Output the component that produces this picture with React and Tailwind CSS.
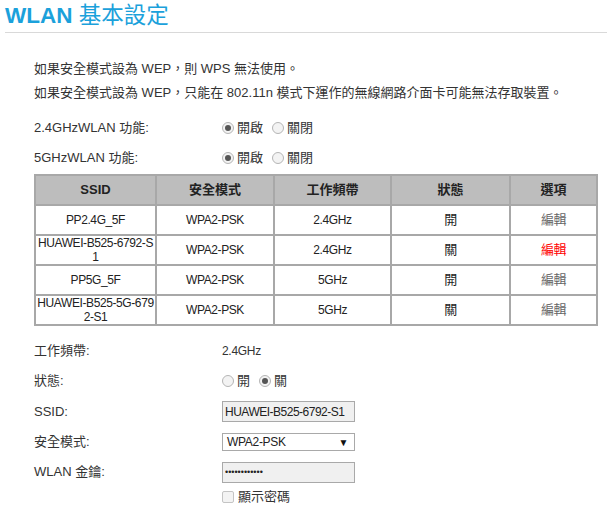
import React from "react";

const font = {
  fontFamily: '"Liberation Sans", Arial, "Noto Sans CJK TC", sans-serif',
};

const networks = [
  { ssid: ["PP2.4G_5F"], mode: "WPA2-PSK", band: "2.4GHz", status: "開", active: false },
  { ssid: ["HUAWEI-B525-6792-S", "1"], mode: "WPA2-PSK", band: "2.4GHz", status: "關", active: true },
  { ssid: ["PP5G_5F"], mode: "WPA2-PSK", band: "5GHz", status: "開", active: false },
  { ssid: ["HUAWEI-B525-5G-679", "2-S1"], mode: "WPA2-PSK", band: "5GHz", status: "關", active: false },
];

const Radio = ({ checked, label }) => (
  <label className="flex items-center mr-[9px]">
    <span className="w-[12px] h-[12px] rounded-full border border-[#b5b5b5] bg-[#f3f3f3] flex items-center justify-center mr-[3px]">
      {checked && <span className="w-[6px] h-[6px] rounded-full bg-[#555]"></span>}
    </span>
    <span>{label}</span>
  </label>
);

const FormRow = ({ label, children, h = "h-[30px]" }) => (
  <div className={`flex items-center ${h}`}>
    <div className="w-[188px]">{label}</div>
    <div className="flex items-center">{children}</div>
  </div>
);

const cell = "border-2 border-[#a8a8a8]";

export default function App() {
  return (
    <div className="w-[607px] h-[516px] bg-white text-[13px] text-[#333] overflow-hidden" style={font}>
      {/* Title */}
      <div className="h-[33px] ml-[5px] border-b border-[#d9d9d9] leading-[31px] text-[22.5px] text-[#1ba1db]">
        <span className="font-bold">WLAN</span>{" "}
        <span className="font-normal">基本設定</span>
      </div>

      <div className="pl-[34px] pr-[11px]">
        {/* Notes */}
        <div className="mt-[24px] leading-[24px]">
          <p>如果安全模式設為 WEP，則 WPS 無法使用。</p>
          <p>如果安全模式設為 WEP，只能在 802.11n 模式下運作的無線網路介面卡可能無法存取裝置。</p>
        </div>

        <div className="mt-[8px]">
          <FormRow label="2.4GHzWLAN 功能:">
            <Radio checked label="開啟" />
            <Radio label="關閉" />
          </FormRow>
          <FormRow label="5GHzWLAN 功能:">
            <Radio checked label="開啟" />
            <Radio label="關閉" />
          </FormRow>
        </div>

        {/* Table */}
        <table className="mt-[1px] w-[562px] border-collapse border-2 border-[#a8a8a8] table-fixed text-center">
          <colgroup>
            <col className="w-[121px]" />
            <col className="w-[118px]" />
            <col className="w-[117px]" />
            <col className="w-[119px]" />
            <col className="w-[87px]" />
          </colgroup>
          <thead>
            <tr className="h-[30px] bg-[#bdbdbd] text-[#222] font-bold">
              <th className={cell}>SSID</th>
              <th className={cell}>安全模式</th>
              <th className={cell}>工作頻帶</th>
              <th className={cell}>狀態</th>
              <th className={cell}>選項</th>
            </tr>
          </thead>
          <tbody className="text-[12px] tracking-[-0.4px] text-[#222]">
            {networks.map((n) => (
              <tr key={n.ssid[0]} className="h-[30px]">
                <td className={`${cell} leading-[14px]`}>
                  {n.ssid.map((line) => (
                    <div key={line}>{line}</div>
                  ))}
                </td>
                <td className={cell}>{n.mode}</td>
                <td className={cell}>{n.band}</td>
                <td className={`${cell} text-[13px]`}>{n.status}</td>
                <td className={`${cell} text-[13px] ${n.active ? "text-[#ff0000]" : "text-[#666]"}`}>
                  編輯
                </td>
              </tr>
            ))}
          </tbody>
        </table>

        {/* Edit form */}
        <div className="mt-[10px]">
          <FormRow label="工作頻帶:">
            <span className="text-[12px] tracking-[-0.3px]">2.4GHz</span>
          </FormRow>
          <FormRow label="狀態:">
            <Radio label="開" />
            <Radio checked label="關" />
          </FormRow>
          <FormRow label="SSID:" h="h-[31px]">
            <input
              readOnly
              value="HUAWEI-B525-6792-S1"
              className="w-[133px] h-[21px] px-[2px] bg-[#f0f0f0] border border-[#a9a9a9] text-[12px] tracking-[-0.5px] text-[#222] outline-none"
              style={font}
            />
          </FormRow>
          <FormRow label="安全模式:">
            <div className="w-[133px] h-[18px] border border-[#a9a9a9] bg-white flex items-center justify-between pl-[4px] pr-[6px] text-[12px] tracking-[-0.3px] text-[#222]">
              <span>WPA2-PSK</span>
              <span className="text-[10px] text-[#111]">▼</span>
            </div>
          </FormRow>
          <FormRow label="WLAN 金鑰:">
            <input
              readOnly
              type="password"
              value="123456789012"
              className="w-[133px] h-[21px] px-[2px] bg-[#f0f0f0] border border-[#a9a9a9] text-[9px] text-[#222] outline-none"
            />
          </FormRow>
          <FormRow label="" h="h-[20px]">
            <span className="w-[12px] h-[12px] border border-[#c4c4c4] bg-[#f3f3f3] rounded-[2px] mr-[4px]"></span>
            <span>顯示密碼</span>
          </FormRow>
        </div>
      </div>
    </div>
  );
}
